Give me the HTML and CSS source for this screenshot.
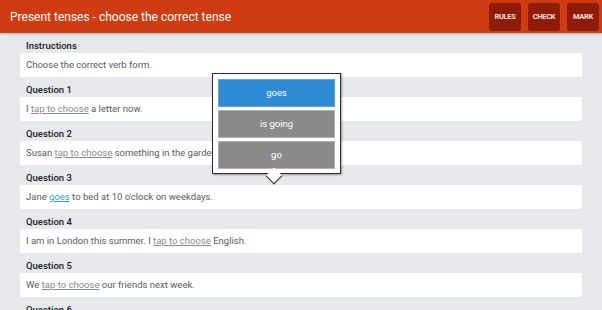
FILE: index.html
```html
<!DOCTYPE html>
<html>
<head>
    <title>Present tenses</title>
    <link rel="stylesheet" href="styles.css">
</head>
<body>

<header class="topbar">
    <h1>Present tenses - choose the correct tense</h1>
    <div class="actions">
        <button class="btn">RULES</button>
        <button class="btn">CHECK</button>
        <button class="btn">MARK</button>
    </div>
</header>

<main class="sheet">
    <div class="item">
        <div class="label">Instructions</div>
        <div class="card">Choose the correct verb form.</div>
    </div>
    <div class="item">
        <div class="label">Question 1</div>
        <div class="card">I <span class="gap">tap to choose</span> a letter now.</div>
    </div>
    <div class="item">
        <div class="label">Question 2</div>
        <div class="card">Susan <span class="gap">tap to choose</span> something in the garden.</div>
    </div>
    <div class="item">
        <div class="label">Question 3</div>
        <div class="card">Jane <span class="gap chosen">goes</span> to bed at 10 o'clock on weekdays.</div>
    </div>
    <div class="item">
        <div class="label">Question 4</div>
        <div class="card">I am in London this summer. I <span class="gap">tap to choose</span> English.</div>
    </div>
    <div class="item">
        <div class="label">Question 5</div>
        <div class="card">We <span class="gap">tap to choose</span> our friends next week.</div>
    </div>
    <div class="item">
        <div class="label">Question 6</div>
        <div class="card">They <span class="gap">tap to choose</span> football on Saturdays.</div>
    </div>

    <div class="picker">
        <div class="option selected">goes</div>
        <div class="option">is going</div>
        <div class="option">go</div>
    </div>
</main>

</body>
</html>
```

FILE: styles.css
```css
body, html {
    margin: 0;
    padding: 0;
    font-family: Roboto, "Liberation Sans", sans-serif;
    background-color: #e6e8ec;
    overflow: hidden;
}

.topbar {
    display: flex;
    align-items: center;
    justify-content: space-between;
    height: 33px;
    background-color: #d03c11;
    box-shadow: 0px 1px 2px rgba(0, 0, 0, 0.25);
    position: relative;
    z-index: 1;
}

.topbar h1 {
    margin: 0;
    padding-left: 10px;
    color: white;
    font-size: 12px;
    font-weight: normal;
}

.actions {
    display: flex;
    gap: 7px;
    padding-right: 3px;
}

.btn {
    width: 32px;
    height: 28px;
    padding: 0;
    border: 0;
    border-radius: 3px;
    background-color: #8e1c08;
    color: #f6e2dc;
    font-family: Roboto, "Liberation Sans", sans-serif;
    font-size: 7.5px;
    font-weight: bold;
    letter-spacing: -0.3px;
}

.sheet {
    position: relative;
    padding: 0 20px;
}

.label {
    height: 20px;
    padding-top: 6px;
    box-sizing: border-box;
    line-height: 14px;
    font-size: 9.5px;
    font-weight: 500;
    color: #222;
    padding-left: 6px;
}

.card {
    height: 24px;
    line-height: 24px;
    background-color: white;
    border-radius: 2px;
    padding-left: 6px;
    font-size: 9.5px;
    color: #5a5a5a;
}

.gap {
    color: #8a8a8a;
    text-decoration: underline;
}

.gap.chosen {
    color: #3a9ad8;
}

.picker {
    position: absolute;
    left: 212px;
    top: 40px;
    width: 117px;
    padding: 5px 5px 4px 5px;
    display: flex;
    flex-direction: column;
    gap: 3px;
    background-color: white;
    border: 1px solid #2a2a2a;
    box-shadow: 1px 1px 2px rgba(0, 0, 0, 0.35);
}

.picker::after {
    content: "";
    position: absolute;
    left: 55px;
    bottom: -9px;
    width: 11px;
    height: 11px;
    background-color: white;
    border-right: 1px solid #2a2a2a;
    border-bottom: 1px solid #2a2a2a;
    transform: rotate(45deg);
}

.option {
    height: 26px;
    line-height: 26px;
    text-align: center;
    color: white;
    font-size: 9.5px;
    background-color: #8b898a;
    border: 1px solid #b3b1b2;
}

.option.selected {
    background-color: #2f8ad6;
    border-color: #5aa6e4;
}
```
